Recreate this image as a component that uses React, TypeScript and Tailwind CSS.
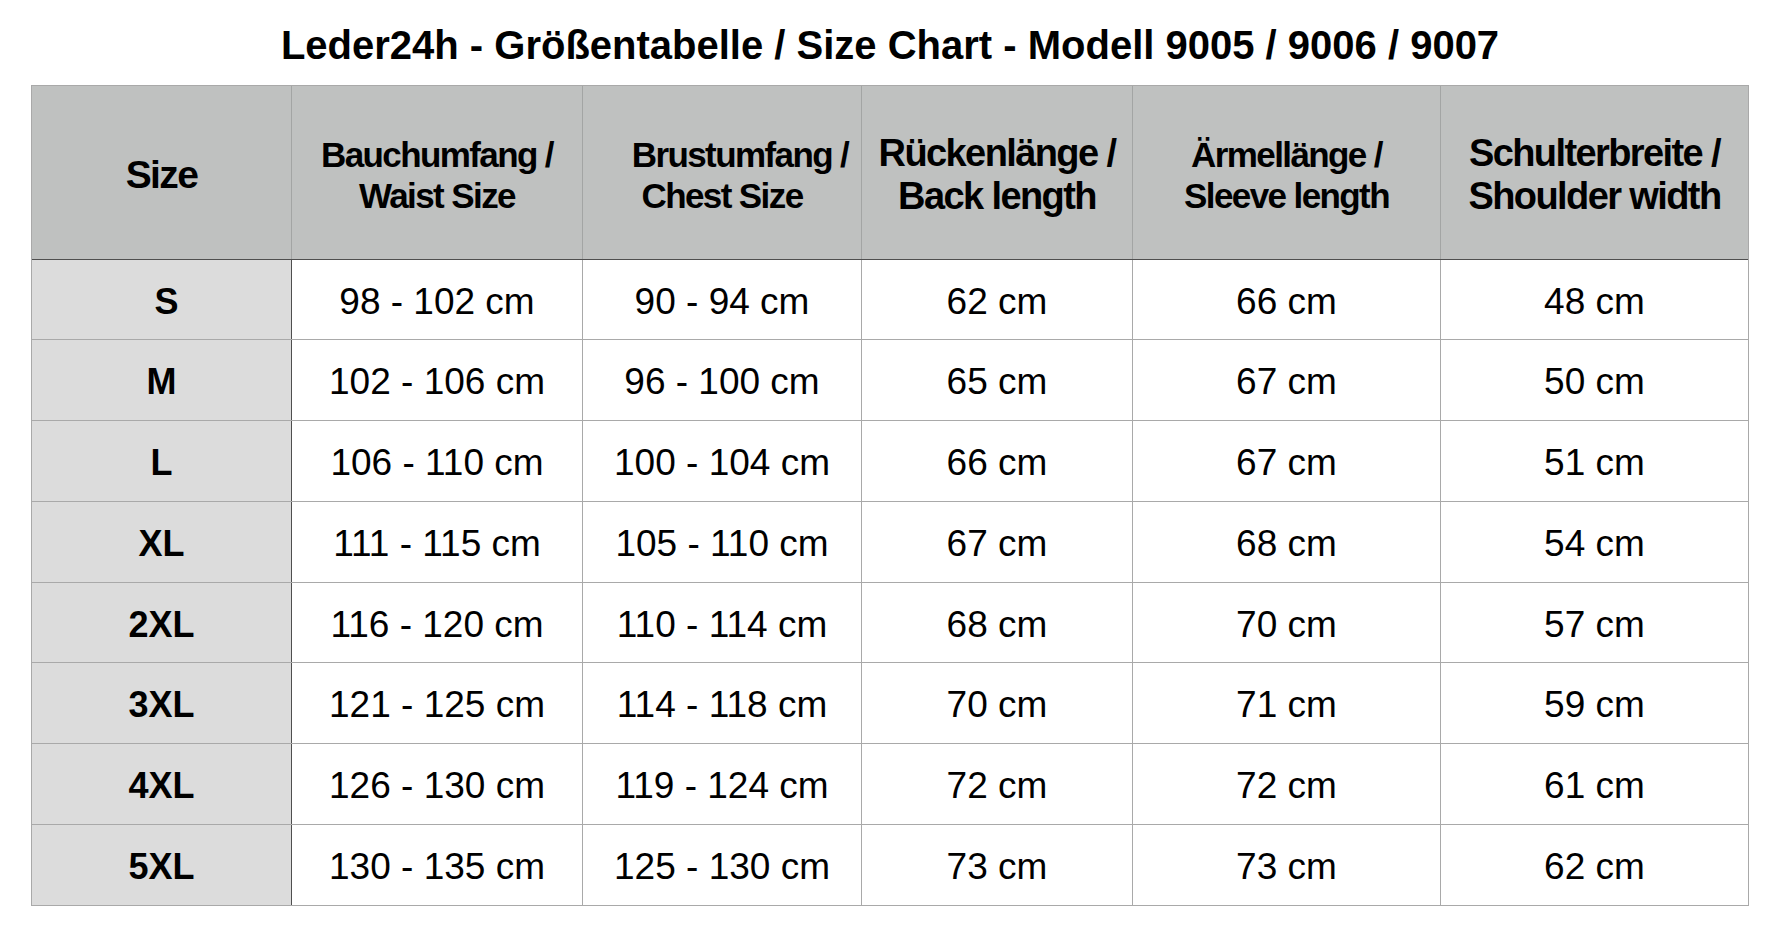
const rows = [
  { size: "S", waist: "98 - 102 cm", chest: "90 - 94 cm", back: "62 cm", sleeve: "66 cm", shoulder: "48 cm", h: "h-[80px]" },
  { size: "M", waist: "102 - 106 cm", chest: "96 - 100 cm", back: "65 cm", sleeve: "67 cm", shoulder: "50 cm", h: "h-[81px]" },
  { size: "L", waist: "106 - 110 cm", chest: "100 - 104 cm", back: "66 cm", sleeve: "67 cm", shoulder: "51 cm", h: "h-[81px]" },
  { size: "XL", waist: "111 - 115 cm", chest: "105 - 110 cm", back: "67 cm", sleeve: "68 cm", shoulder: "54 cm", h: "h-[81px]" },
  { size: "2XL", waist: "116 - 120 cm", chest: "110 - 114 cm", back: "68 cm", sleeve: "70 cm", shoulder: "57 cm", h: "h-[80px]" },
  { size: "3XL", waist: "121 - 125 cm", chest: "114 - 118 cm", back: "70 cm", sleeve: "71 cm", shoulder: "59 cm", h: "h-[81px]" },
  { size: "4XL", waist: "126 - 130 cm", chest: "119 - 124 cm", back: "72 cm", sleeve: "72 cm", shoulder: "61 cm", h: "h-[81px]" },
  { size: "5XL", waist: "130 - 135 cm", chest: "125 - 130 cm", back: "73 cm", sleeve: "73 cm", shoulder: "62 cm", h: "h-[80px]" },
];

// column widths include the right grid line
const colW = ["w-[260px]", "w-[291px]", "w-[279px]", "w-[271px]", "w-[308px]", "w-[307px]"];

function HeaderCell({ width, last, big, children }: { width: string; last?: boolean; big?: boolean; children: React.ReactNode }) {
  return (
    <div
      className={`${width} shrink-0 flex flex-col items-center justify-center pt-[4px] bg-[#bfc1c0] font-bold text-black tracking-[-1.6px] ${
        big ? "text-[38px] leading-[43px]" : "text-[35px] leading-[41px]"
      } ${last ? "" : "border-r border-[#a3a5a4]"}`}
    >
      {children}
    </div>
  );
}

function Cell({ width, last, children }: { width: string; last?: boolean; children: React.ReactNode }) {
  return (
    <div
      className={`${width} shrink-0 flex items-center justify-center pt-[4px] text-[37px] text-black ${
        last ? "" : "border-r border-[#a9a9a9]"
      }`}
    >
      {children}
    </div>
  );
}

export default function App() {
  return (
    <div className="w-[1776px] h-[930px] bg-white font-['Liberation_Sans',Arial,Helvetica,sans-serif] text-black">
      <div className="h-[85px] pt-[5px] pl-[31px] w-[1749px] flex items-center justify-center">
        <h1 className="text-[40px] leading-none font-bold whitespace-nowrap">
          Leder24h - Größentabelle / Size Chart - Modell 9005 / 9006 / 9007
        </h1>
      </div>

      <div className="ml-[31px] w-[1718px] border border-[#a9a9a9] flex flex-col">
        {/* header */}
        <div className="h-[174px] flex border-b border-[#4f4f4f]">
          <HeaderCell width={colW[0]} big>
            <span className="text-[39px]">Size</span>
          </HeaderCell>
          <HeaderCell width={colW[1]}>
            <span>Bauchumfang /</span>
            <span>Waist Size</span>
          </HeaderCell>
          <HeaderCell width={colW[2]}>
            <span className="pl-[36px]">Brustumfang /</span>
            <span>Chest Size</span>
          </HeaderCell>
          <HeaderCell width={colW[3]} big>
            <span>Rückenlänge /</span>
            <span>Back length</span>
          </HeaderCell>
          <HeaderCell width={colW[4]}>
            <span>Ärmellänge /</span>
            <span>Sleeve length</span>
          </HeaderCell>
          <HeaderCell width={colW[5]} big last>
            <span>Schulterbreite /</span>
            <span>Shoulder width</span>
          </HeaderCell>
        </div>

        {/* body */}
        {rows.map((r, i) => (
          <div key={r.size} className={`${r.h} flex ${i < rows.length - 1 ? "border-b border-[#a9a9a9]" : ""}`}>
            <div
              className={`${colW[0]} shrink-0 flex items-center justify-center pt-[4px] bg-[#dcdcdc] border-r border-[#4f4f4f] text-[36px] font-bold`}
            >
              <span className={r.size === "S" ? "pl-[10px]" : ""}>{r.size}</span>
            </div>
            <Cell width={colW[1]}>{r.waist}</Cell>
            <Cell width={colW[2]}>{r.chest}</Cell>
            <Cell width={colW[3]}>{r.back}</Cell>
            <Cell width={colW[4]}>{r.sleeve}</Cell>
            <Cell width={colW[5]} last>
              {r.shoulder}
            </Cell>
          </div>
        ))}
      </div>
    </div>
  );
}
